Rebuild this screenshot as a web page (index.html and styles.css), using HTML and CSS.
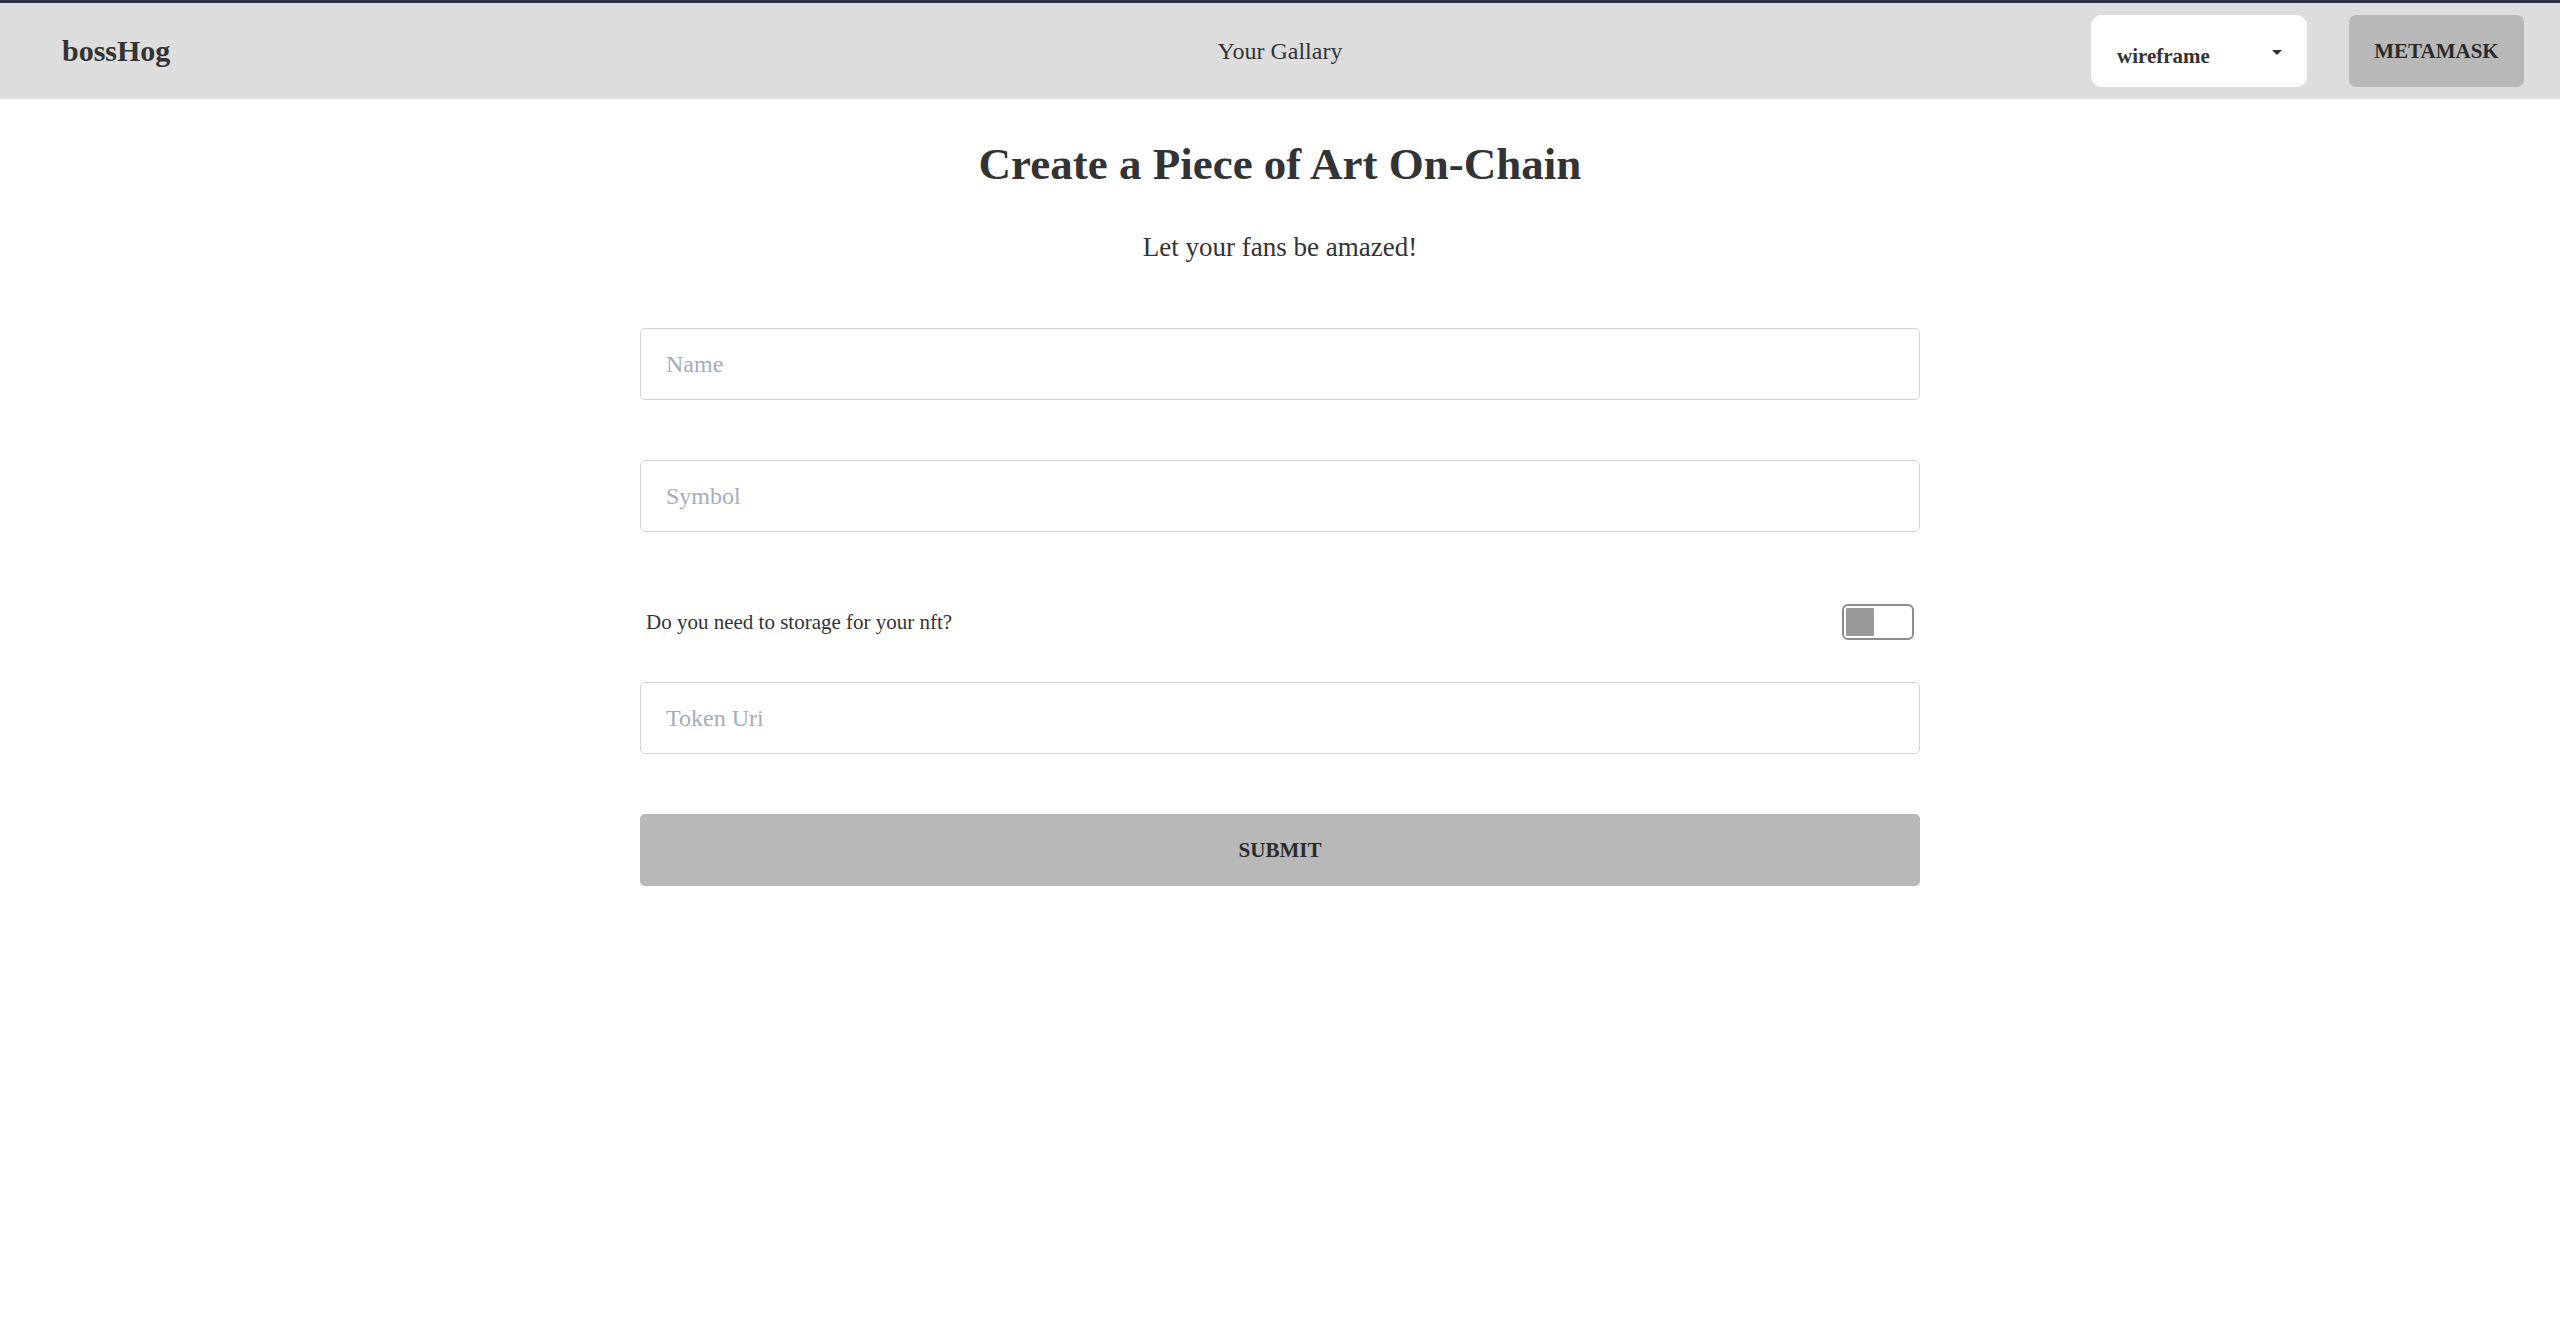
FILE: index.html
```html
<!DOCTYPE html>
<html lang="en">
<head>
<meta charset="utf-8">
<title>bossHog</title>
<link rel="stylesheet" href="styles.css">
</head>
<body>
<header class="navbar">
  <div class="nav-start"><a class="brand" href="#">bossHog</a></div>
  <nav class="nav-center"><a class="nav-link" href="#">Your Gallary</a></nav>
  <div class="nav-end">
    <button class="theme-select" type="button">
      <span class="theme-label">wireframe</span>
      <svg class="caret" width="10" height="5" viewBox="0 0 10 5" aria-hidden="true"><path d="M0 0 L10 0 L5 5 Z" fill="#333"/></svg>
    </button>
    <button class="btn-wallet" type="button">METAMASK</button>
  </div>
</header>
<main class="page">
  <h1 class="title">Create a Piece of Art On-Chain</h1>
  <p class="subtitle">Let your fans be amazed!</p>
  <form class="mint-form">
    <input class="field" type="text" placeholder="Name">
    <input class="field field-gap" type="text" placeholder="Symbol">
    <label class="toggle-row">
      <span class="toggle-text">Do you need to storage for your nft?</span>
      <span class="toggle"><span class="toggle-knob"></span></span>
    </label>
    <input class="field field-tight" type="text" placeholder="Token Uri">
    <button class="btn-submit" type="button">SUBMIT</button>
  </form>
</main>
</body>
</html>
```
FILE: styles.css
```css
* { box-sizing: border-box; }
html, body { margin: 0; padding: 0; }
body {
  background: #ffffff;
  color: #333333;
  font-family: "Liberation Serif", "Times New Roman", serif;
}
a { color: inherit; text-decoration: none; }
button, input { font-family: "Liberation Serif", "Times New Roman", serif; }

.navbar {
  display: grid;
  grid-template-columns: 1fr auto 1fr;
  align-items: center;
  height: 99px;
  border-top: 3px solid #2e3242;
  background: #dddddd;
}
.nav-start { padding-left: 62px; }
.brand {
  font-size: 30px;
  font-weight: bold;
  line-height: 40px;
  color: #333333;
}
.nav-center { display: flex; justify-content: center; }
.nav-link {
  font-size: 24px;
  line-height: 34px;
  color: #333333;
}
.nav-end {
  display: flex;
  justify-content: flex-end;
  align-items: center;
  gap: 42px;
  padding-right: 36px;
}
.theme-select {
  display: flex;
  align-items: center;
  justify-content: space-between;
  width: 216px;
  height: 72px;
  padding: 0 25px 0 26px;
  border: none;
  border-radius: 11px;
  background: #ffffff;
  color: #333333;
}
.theme-label {
  font-size: 21px;
  font-weight: bold;
  line-height: 30px;
  padding-top: 10px;
}
.caret { display: block; margin-top: 3px; }
.btn-wallet {
  width: 175px;
  height: 72px;
  border: none;
  border-radius: 7px;
  background: #b8b8b8;
  color: #2b2b2b;
  font-size: 21px;
  font-weight: bold;
  line-height: 30px;
  padding: 0;
}

.page {
  display: flex;
  flex-direction: column;
  align-items: center;
  padding-top: 38px;
}
.title {
  margin: 0;
  font-size: 45px;
  line-height: 54px;
  font-weight: bold;
  color: #333333;
}
.subtitle {
  margin: 35px 0 0;
  font-size: 27px;
  line-height: 42px;
  color: #333333;
}
.mint-form {
  width: 1280px;
  margin-top: 60px;
  display: flex;
  flex-direction: column;
}
.field {
  display: block;
  width: 100%;
  height: 72px;
  padding: 0 24px 0 25px;
  border: 1px solid #d3d3d3;
  border-radius: 5px;
  background: #ffffff;
  font-size: 24px;
  color: #333333;
  outline: none;
}
.field::placeholder { color: #a5acba; }
.field-gap { margin-top: 60px; }
.field-tight { margin-top: 30px; }
.toggle-row {
  display: flex;
  align-items: center;
  justify-content: space-between;
  height: 60px;
  margin-top: 60px;
  padding: 0 6px;
}
.toggle-text {
  font-size: 21px;
  line-height: 30px;
  color: #333333;
}
.toggle {
  display: flex;
  align-items: center;
  width: 72px;
  height: 36px;
  padding: 2px;
  border: 2px solid #8c8c8c;
  border-radius: 6px;
  background: #ffffff;
}
.toggle-knob {
  display: block;
  width: 28px;
  height: 28px;
  background: #999999;
  border-radius: 1px;
}
.btn-submit {
  margin-top: 60px;
  width: 100%;
  height: 72px;
  border: none;
  border-radius: 5px;
  background: #b8b8b8;
  color: #2b2b2b;
  font-size: 21px;
  font-weight: bold;
  line-height: 30px;
  padding: 0;
}
```
